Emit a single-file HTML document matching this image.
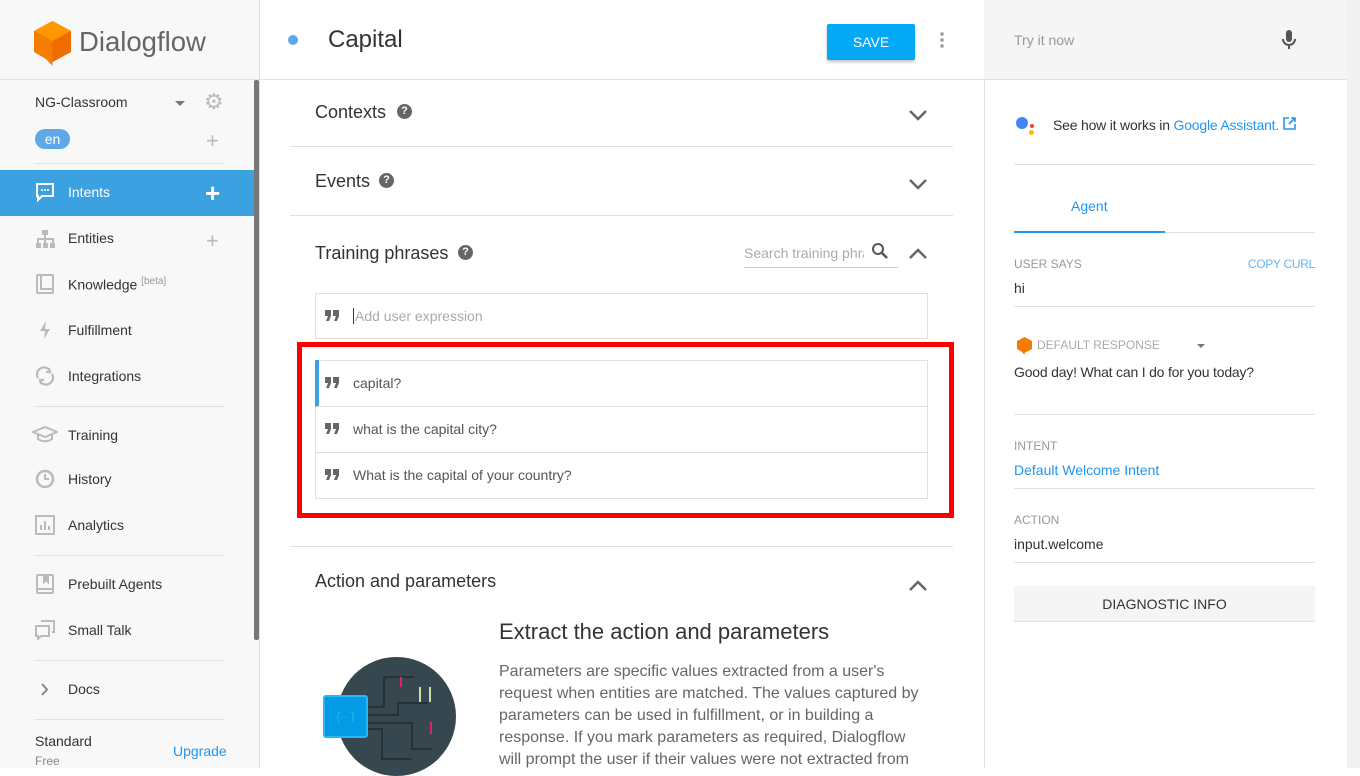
<!DOCTYPE html>
<html><head><meta charset="utf-8"><style>
*{margin:0;padding:0;box-sizing:border-box}
body{width:1360px;height:768px;overflow:hidden;font-family:"Liberation Sans",sans-serif;background:#fff;position:relative;color:#333}
.a{position:absolute}
#side{left:0;top:0;width:260px;height:768px;background:#f8f8f8;border-right:1px solid #e0e0e0}
.nav{position:absolute;left:68px;font-size:14px;color:#333}
.ic{position:absolute;left:35px;width:20px;height:20px}
.hr{position:absolute;left:35px;width:189px;height:1px;background:#e0e0e0}
.sec{font-size:18px;color:#333}
.line{position:absolute;left:290px;width:663px;height:1px;background:#e0e0e0}
.chev{position:absolute;left:908px;width:20px;height:12px}
.lbl{font-size:12px;color:#999;text-transform:uppercase}
.rl{position:absolute;left:1014px;width:301px;height:1px;background:#e0e0e0}
.q{position:absolute;left:325px;width:14px;height:11px}
.hq{position:absolute;width:15px;height:15px;border-radius:50%;background:#666;color:#fff;font-size:11px;font-weight:bold;text-align:center;line-height:15px}
</style></head><body>
<svg width="0" height="0" style="position:absolute"><defs><symbol id="qt" viewBox="0 0 14 11"><path d="M0 0h6v6l-2 5H1l2-5H0zM8 0h6v6l-2 5H9l2-5H8z" fill="#666"/></symbol></defs></svg>
<div id="side" class="a">
 <svg class="a" style="left:34px;top:21px" width="37" height="45" viewBox="0 0 37 45"><polygon points="18.5,0 37,10 37,31 18.5,41 18.5,45 12,38 0,31 0,10" fill="#f57c00"/><polygon points="18.5,0 37,10 18.5,20 0,10" fill="#ff9800"/><polygon points="18.5,20 37,10 37,31 18.5,41" fill="#ef6c00"/></svg>
 <div class="a" style="left:79px;top:26px;font-size:27.5px;color:#666">Dialogflow</div>
 <div class="a" style="left:0;top:79px;width:260px;height:1px;background:#e0e0e0"></div>
 <div class="a" style="left:254px;top:80px;width:5px;height:560px;background:#777;border-radius:2px"></div>
 <div class="a" style="left:35px;top:94px;font-size:14px">NG-Classroom</div>
 <div class="a" style="left:175px;top:101px;border:5px solid transparent;border-top:5px solid #777"></div>
 <div class="a" style="left:204px;top:91px;font-size:22px;color:#bbb;line-height:22px">⚙</div>
 <div class="a" style="left:35px;top:129px;width:35px;height:20px;border-radius:10px;background:#5fa8e8;color:#fff;font-size:14px;text-align:center;line-height:20px">en</div>
 <div class="a" style="left:206px;top:130px;font-size:22px;color:#bbb;line-height:22px">+</div>
 <div class="hr" style="top:163px"></div>
 <div class="a" style="left:0;top:170px;width:254px;height:46px;background:#3ba1e0"></div>
 <svg class="ic" style="top:182px" viewBox="0 0 20 20"><path d="M2 2h16v12H7l-4 4v-4H2z" fill="none" stroke="#fff" stroke-width="2"/><circle cx="7" cy="8" r="1" fill="#fff"/><circle cx="10" cy="8" r="1" fill="#fff"/><circle cx="13" cy="8" r="1" fill="#fff"/></svg>
 <div class="nav" style="top:184px;color:#fff">Intents</div>
 <div class="a" style="left:205px;top:180px;font-size:26px;color:#fff;font-weight:bold;line-height:26px">+</div>
 <svg class="ic" style="top:229px" viewBox="0 0 20 20" fill="#bbb"><rect x="7" y="1" width="6" height="5"/><rect x="1" y="14" width="5" height="5"/><rect x="8" y="14" width="5" height="5"/><rect x="15" y="14" width="5" height="5"/><path d="M10 6v8M3 14v-4h15v4" stroke="#bbb" stroke-width="2" fill="none"/></svg>
 <div class="nav" style="top:230px">Entities</div>
 <div class="a" style="left:206px;top:230px;font-size:22px;color:#bbb;line-height:22px">+</div>
 <svg class="ic" style="top:274px" viewBox="0 0 20 20"><rect x="2" y="1" width="16" height="18" rx="1" fill="none" stroke="#bbb" stroke-width="2"/><path d="M6 1v14h12" fill="none" stroke="#bbb" stroke-width="2"/></svg>
 <div class="nav" style="top:276px">Knowledge <sup style="font-size:10px;color:#999">[beta]</sup></div>
 <svg class="ic" style="top:320px" viewBox="0 0 20 20"><path d="M11 1L5 11h5l-1 8 6-10h-5z" fill="#bbb"/></svg>
 <div class="nav" style="top:322px">Fulfillment</div>
 <svg class="ic" style="top:366px" viewBox="0 0 20 20"><path d="M3 12A7 7 0 0 1 14 3.5M14 2l1 4-4 0M17 8a7 7 0 0 1-11 8.5M6 18l-1-4 4 0" fill="none" stroke="#bbb" stroke-width="2.2"/></svg>
 <div class="nav" style="top:368px">Integrations</div>
 <div class="hr" style="top:406px"></div>
 <svg class="ic" style="top:424px;left:32px;width:26px" viewBox="0 0 26 20"><path d="M13 3L1 8l12 5 12-5zM6 10v5c4 3 10 3 14 0v-5" fill="none" stroke="#bbb" stroke-width="2"/></svg>
 <div class="nav" style="top:427px">Training</div>
 <svg class="ic" style="top:469px" viewBox="0 0 20 20"><circle cx="10" cy="10" r="8" fill="none" stroke="#bbb" stroke-width="2.5"/><path d="M10 5v5h4" fill="none" stroke="#bbb" stroke-width="2"/></svg>
 <div class="nav" style="top:471px">History</div>
 <svg class="ic" style="top:515px" viewBox="0 0 20 20"><rect x="1" y="1" width="18" height="18" fill="none" stroke="#bbb" stroke-width="2"/><path d="M6 15V10M10 15V6M14 15v-4" stroke="#bbb" stroke-width="2"/></svg>
 <div class="nav" style="top:517px">Analytics</div>
 <div class="hr" style="top:555px"></div>
 <svg class="ic" style="top:574px" viewBox="0 0 20 20"><rect x="2" y="1" width="16" height="18" rx="1" fill="none" stroke="#bbb" stroke-width="2"/><path d="M3 15h15M9 1v7l2-2 2 2V1" fill="#bbb" stroke="#bbb" stroke-width="2"/></svg>
 <div class="nav" style="top:576px">Prebuilt Agents</div>
 <svg class="ic" style="top:620px" viewBox="0 0 20 20"><path d="M6 1h13v11h-2M1 6h13v10H6l-3 3v-3H1z" fill="none" stroke="#bbb" stroke-width="2"/></svg>
 <div class="nav" style="top:622px">Small Talk</div>
 <div class="hr" style="top:660px"></div>
 <svg class="a" style="left:40px;top:683px" width="9" height="13" viewBox="0 0 9 13"><path d="M2 1l5 5.5L2 12" fill="none" stroke="#888" stroke-width="2"/></svg>
 <div class="nav" style="top:681px">Docs</div>
 <div class="hr" style="top:719px"></div>
 <div class="a" style="left:35px;top:733px;font-size:14px">Standard</div>
 <div class="a" style="left:35px;top:754px;font-size:12px;color:#888">Free</div>
 <div class="a" style="left:173px;top:743px;font-size:14px;color:#2196f3">Upgrade</div>
</div>

<!-- main -->
<div class="a" style="left:288px;top:35px;width:10px;height:10px;border-radius:50%;background:#5fa8e8"></div>
<div class="a" style="left:328px;top:26px;font-size:24px;color:#333">Capital</div>
<div class="a" style="left:827px;top:24px;width:88px;height:36px;background:#03a9f4;color:#fff;font-size:14px;text-align:center;line-height:36px;box-shadow:0 2px 3px rgba(0,0,0,.25);border-radius:2px">SAVE</div>
<div class="a" style="left:940px;top:31px;width:4px;height:18px;background:radial-gradient(circle,#999 1.6px,transparent 2px) 0 0/4px 6px"></div>
<div class="a" style="left:260px;top:79px;width:724px;height:1px;background:#e0e0e0"></div>

<div class="a sec" style="left:315px;top:102px">Contexts</div>
<div class="hq" style="left:397px;top:104px">?</div>
<svg class="chev" style="top:109px" viewBox="0 0 20 12"><path d="M2 2l8 8 8-8" fill="none" stroke="#666" stroke-width="2.5"/></svg>
<div class="line" style="top:146px"></div>
<div class="a sec" style="left:315px;top:171px">Events</div>
<div class="hq" style="left:379px;top:173px">?</div>
<svg class="chev" style="top:178px" viewBox="0 0 20 12"><path d="M2 2l8 8 8-8" fill="none" stroke="#666" stroke-width="2.5"/></svg>
<div class="line" style="top:215px"></div>
<div class="a sec" style="left:315px;top:243px">Training phrases</div>
<div class="hq" style="left:458px;top:245px">?</div>
<div class="a" style="left:744px;top:245px;width:120px;font-size:14px;color:#aaa;white-space:nowrap;overflow:hidden">Search training phrases</div>
<div class="a" style="left:744px;top:267px;width:154px;height:1px;background:#ccc"></div>
<svg class="a" style="left:871px;top:242px" width="18" height="18" viewBox="0 0 18 18"><circle cx="7" cy="7" r="5" fill="none" stroke="#555" stroke-width="2"/><path d="M11 11l5 5" stroke="#555" stroke-width="2.5"/></svg>
<svg class="chev" style="top:248px" viewBox="0 0 20 12"><path d="M2 10l8-8 8 8" fill="none" stroke="#666" stroke-width="2.5"/></svg>

<div class="a" style="left:315px;top:293px;width:613px;height:46px;border:1px solid #e0e0e0"></div>
<svg class="q" style="top:310px"><use href="#qt"/></svg>
<div class="a" style="left:353px;top:308px;font-size:14px;color:#aaa;border-left:1px solid #333;padding-left:1px">Add user expression</div>

<div class="a" style="left:315px;top:360px;width:613px;height:139px;border:1px solid #e0e0e0"></div>
<div class="a" style="left:315px;top:360px;width:4px;height:47px;background:#3ba1e0"></div>
<div class="a" style="left:316px;top:406px;width:611px;height:1px;background:#e0e0e0"></div>
<div class="a" style="left:316px;top:452px;width:611px;height:1px;background:#e0e0e0"></div>
<svg class="q" style="top:377px"><use href="#qt"/></svg><div class="a" style="left:353px;top:375px;font-size:14px;color:#555">capital?</div>
<svg class="q" style="top:423px"><use href="#qt"/></svg><div class="a" style="left:353px;top:421px;font-size:14px;color:#555">what is the capital city?</div>
<svg class="q" style="top:469px"><use href="#qt"/></svg><div class="a" style="left:353px;top:467px;font-size:14px;color:#555">What is the capital of your country?</div>
<div class="a" style="left:297px;top:342px;width:657px;height:176px;border:5px solid #f00"></div>

<div class="line" style="top:546px"></div>
<div class="a sec" style="left:315px;top:571px">Action and parameters</div>
<svg class="chev" style="top:580px" viewBox="0 0 20 12"><path d="M2 10l8-8 8 8" fill="none" stroke="#666" stroke-width="2.5"/></svg>
<div class="a" style="left:337px;top:657px;width:119px;height:119px;border-radius:50%;background:#37474f"></div>
<svg class="a" style="left:337px;top:657px" width="119" height="111" viewBox="0 0 119 111"><path d="M25 50h22v-30h30M25 58h36v-12h30M25 66h50v26h20M25 72h20v30h30" fill="none" stroke="#263238" stroke-width="2"/><rect x="63" y="20" width="2" height="10" fill="#e91e63"/><rect x="82" y="30" width="2" height="15" fill="#c5e1a5"/><rect x="92" y="30" width="2" height="15" fill="#c5e1a5"/><rect x="93" y="65" width="2" height="12" fill="#e91e63"/></svg>
<div class="a" style="left:323px;top:695px;width:45px;height:43px;background:#039be5;border-radius:3px;border:2px solid #29b6f6;color:#29b6f6;font-size:11px;text-align:center;line-height:40px">{···}</div>
<div class="a" style="left:499px;top:619px;font-size:22px;color:#333">Extract the action and parameters</div>
<div class="a" style="left:499px;top:661px;width:430px;font-size:16px;line-height:22px;color:#666">Parameters are specific values extracted from a user's request when entities are matched. The values captured by parameters can be used in fulfillment, or in building a response. If you mark parameters as required, Dialogflow will prompt the user if their values were not extracted from</div>

<!-- right -->
<div class="a" style="left:984px;top:0;width:376px;height:768px;border-left:1px solid #e0e0e0;background:#fff"></div>
<div class="a" style="left:984px;top:0;width:376px;height:80px;background:#f5f5f5;border-bottom:1px solid #e0e0e0"></div>
<div class="a" style="left:1014px;top:32px;font-size:14px;color:#999">Try it now</div>
<svg class="a" style="left:1281px;top:29px" width="16" height="22" viewBox="0 0 16 22"><rect x="5" y="1" width="6" height="12" rx="3" fill="#555"/><path d="M2 10a6 6 0 0 0 12 0M8 16v4" fill="none" stroke="#555" stroke-width="2"/></svg>
<div class="a" style="left:1347px;top:0;width:13px;height:768px;background:#f1f1f1"></div>
<div class="a" style="left:1016px;top:117px;width:12px;height:12px;border-radius:50%;background:#4285f4"></div>
<div class="a" style="left:1030px;top:124px;width:4px;height:4px;border-radius:50%;background:#ea4335"></div>
<div class="a" style="left:1029px;top:130px;width:5px;height:5px;border-radius:50%;background:#fbbc05"></div>
<div class="a" style="left:1053px;top:117px;font-size:14px;color:#333;letter-spacing:-.2px">See how it works in <span style="color:#2196f3">Google Assistant.</span> <svg width="13" height="13" viewBox="0 0 13 13"><path d="M6 1H1v11h11V7M8 1h4v4M12 1L6 7" fill="none" stroke="#2196f3" stroke-width="1.6"/></svg></div>
<div class="rl" style="top:164px"></div>
<div class="a" style="left:1071px;top:198px;font-size:14px;color:#2196f3">Agent</div>
<div class="rl" style="top:232px"></div>
<div class="a" style="left:1014px;top:231px;width:151px;height:2px;background:#2196f3"></div>
<div class="a lbl" style="left:1014px;top:257px">User says</div>
<div class="a lbl" style="left:1215px;width:100px;text-align:right;top:257px;color:#64b5f6;letter-spacing:-.3px">Copy curl</div>
<div class="a" style="left:1014px;top:280px;font-size:14px">hi</div>
<div class="rl" style="top:306px"></div>
<svg class="a" style="left:1017px;top:337px" width="15" height="18" viewBox="0 0 15 18"><polygon points="7.5,0 15,4 15,12 7.5,16 7.5,18 5,15 0,12 0,4" fill="#f57c00"/></svg>
<div class="a lbl" style="left:1037px;top:338px;color:#aaa">Default response</div>
<div class="a" style="left:1197px;top:344px;border:4px solid transparent;border-top:4px solid #777"></div>
<div class="a" style="left:1014px;top:364px;font-size:14px;letter-spacing:-.2px">Good day! What can I do for you today?</div>
<div class="rl" style="top:414px"></div>
<div class="a lbl" style="left:1014px;top:439px">Intent</div>
<div class="a" style="left:1014px;top:462px;font-size:14px;color:#2196f3">Default Welcome Intent</div>
<div class="rl" style="top:488px"></div>
<div class="a lbl" style="left:1014px;top:513px">Action</div>
<div class="a" style="left:1014px;top:536px;font-size:14px">input.welcome</div>
<div class="rl" style="top:562px"></div>
<div class="a" style="left:1014px;top:586px;width:301px;height:36px;background:#f5f5f5;border-bottom:1px solid #e0e0e0;font-size:14px;text-align:center;line-height:36px;color:#333">DIAGNOSTIC INFO</div>
</body></html>
